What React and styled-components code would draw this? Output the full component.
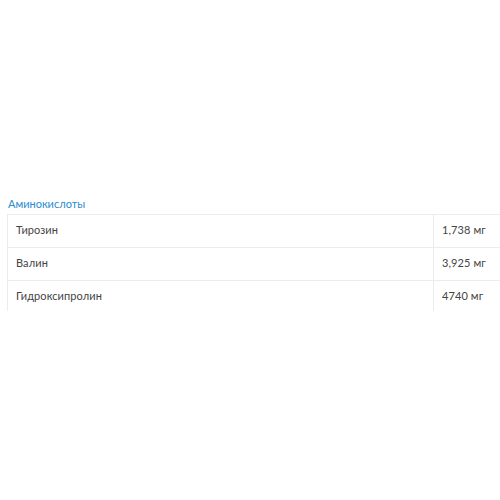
import React from 'react'
import styled, { createGlobalStyle } from 'styled-components'

const Global = createGlobalStyle`
  html, body {
    margin: 0;
    background: #fff;
  }
  body {
    font-family: Lato, 'Noto Sans', sans-serif;
  }
`

const Page = styled.div`
  width: 500px;
  height: 500px;
  overflow: hidden;
  padding: 197px 0 0 7px;
  box-sizing: border-box;
`

const Title = styled.div`
  font-size: 11px;
  line-height: 14px;
  color: #2a8bcf;
  padding-left: 1px;
  margin-bottom: 3px;
`

const Table = styled.div`
  width: 520px;
  height: 96px;
  overflow: hidden;
  border-left: 1px solid #ececec;
  border-top: 1px solid #ececec;
`

const Row = styled.div`
  display: grid;
  grid-template-columns: 425px 1fr;
  height: 33px;
  border-bottom: 1px solid #ececec;
  box-sizing: border-box;
`

const Cell = styled.div`
  display: flex;
  align-items: center;
  padding: 0 8px 3px;
  font-size: 11px;
  letter-spacing: 0.1px;
  color: #444;
  border-left: ${p => (p.$value ? '1px solid #ececec' : 'none')};
`

const rows = [
  ['Тирозин', '1,738 мг'],
  ['Валин', '3,925 мг'],
  ['Гидроксипролин', '4740 мг'],
]

export default function App() {
  return (
    <Page>
      <Global />
      <Title>Аминокислоты</Title>
      <Table>
        {rows.map(([name, value]) => (
          <Row key={name}>
            <Cell>{name}</Cell>
            <Cell $value>{value}</Cell>
          </Row>
        ))}
      </Table>
    </Page>
  )
}
